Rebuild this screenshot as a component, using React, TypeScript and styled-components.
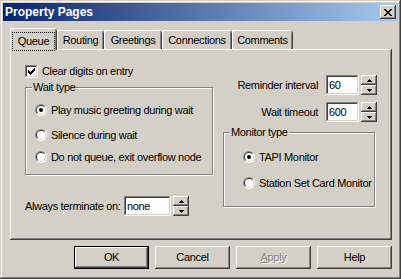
import React from "react";
import styled, { createGlobalStyle, css } from "styled-components";

const FACE = "#D4D0C8";
const SHADOW = "#808080";
const DARK = "#404040";
const HI = "#FFFFFF";

const Global = createGlobalStyle`
  html, body { margin: 0; padding: 0; background: ${FACE}; }
  body {
    font-family: "Liberation Sans", Arial, sans-serif;
    font-size: 11px;
    letter-spacing: -0.33px;
    color: #000;
  }
  * { box-sizing: border-box; }
`;

const raised = css`
  box-shadow: inset -1px -1px ${DARK}, inset 1px 1px ${HI},
    inset -2px -2px ${SHADOW}, inset 2px 2px ${FACE};
`;

const sunken = css`
  box-shadow: inset -1px -1px ${HI}, inset 1px 1px ${SHADOW},
    inset -2px -2px ${FACE}, inset 2px 2px ${DARK};
`;

const Window = styled.div`
  width: 401px;
  height: 279px;
  background: ${FACE};
  padding: 3px;
  display: flex;
  flex-direction: column;
  white-space: nowrap;
  box-shadow: inset -1px -1px ${DARK}, inset 1px 1px ${FACE},
    inset -2px -2px ${SHADOW}, inset 2px 2px ${HI};
`;

const TitleBar = styled.div`
  height: 18px;
  background: linear-gradient(to right, #0a246a, #a6caf0);
  display: flex;
  align-items: center;
  justify-content: space-between;
  padding: 0 2px 0 2px;
`;

const Title = styled.span`
  color: #fff;
  font-weight: bold;
  font-size: 12px;
  letter-spacing: 0;
  line-height: 14px;
`;

const CloseButton = styled.div`
  width: 16px;
  height: 14px;
  background: ${FACE};
  ${raised};
  display: flex;
  align-items: center;
  justify-content: center;
`;

const Body = styled.div`
  flex: 1;
  display: flex;
  flex-direction: column;
  padding: 7px 6px 0 7px;
`;

const TabStrip = styled.div`
  display: flex;
  align-items: flex-end;
  height: 21px;
`;

const Tab = styled.div<{ $active?: boolean; $w: number }>`
  width: ${(p) => p.$w}px;
  height: ${(p) => (p.$active ? 22 : 19)}px;
  background: ${FACE};
  display: flex;
  justify-content: center;
  align-items: flex-start;
  padding-top: ${(p) => (p.$active ? 5 : 4)}px;
  line-height: 13px;
  border-radius: 2px 2px 0 0;
  box-shadow: inset 1px 0 ${HI}, inset 0 1px ${HI}, inset -1px 0 ${DARK},
    inset -2px 0 ${SHADOW};
  ${(p) =>
    p.$active &&
    css`
      position: relative;
      z-index: 1;
      margin-bottom: -1px;
    `}
`;

const FocusLabel = styled.span`
  outline: 1px dotted #000;
  outline-offset: 0;
  padding: 2px 5px;
`;

const Panel = styled.div`
  width: 382px;
  height: 191px;
  background: ${FACE};
  ${raised};
  display: grid;
  grid-template-columns: 213px 1fr;
`;

const LeftCol = styled.div`
  display: flex;
  flex-direction: column;
  align-items: flex-start;
  padding: 16px 0 0 15px;
`;

const RightCol = styled.div`
  display: flex;
  flex-direction: column;
  padding: 26px 15px 0 0;
`;

const CheckRow = styled.label`
  display: flex;
  align-items: center;
  gap: 4px;
  height: 13px;
  line-height: 13px;
`;

const CheckBox = styled.span`
  width: 13px;
  height: 13px;
  background: #fff;
  ${sunken};
  display: block;
`;

const GroupBox = styled.div<{ $w: number; $h: number; $mt: number }>`
  position: relative;
  width: ${(p) => p.$w}px;
  height: ${(p) => p.$h}px;
  margin-top: ${(p) => p.$mt}px;
  border: 1px solid ${SHADOW};
  box-shadow: inset 1px 1px ${HI}, 1px 1px ${HI};
  display: flex;
  flex-direction: column;
`;

const GroupLabel = styled.span`
  position: absolute;
  top: -7px;
  left: 6px;
  padding: 0 1px;
  background: ${FACE};
  line-height: 13px;
`;

const RadioRow = styled.div<{ $mt: number; $ml: number }>`
  display: flex;
  align-items: center;
  gap: 4px;
  height: 14px;
  line-height: 14px;
  margin-top: ${(p) => p.$mt}px;
  margin-left: ${(p) => p.$ml}px;
`;

const RadioBox = styled.span`
  width: 12px;
  height: 12px;
  display: block;
  flex: none;
`;

const SpinRow = styled.div<{ $mt?: number }>`
  display: flex;
  align-items: center;
  justify-content: flex-end;
  height: 20px;
  margin-top: ${(p) => p.$mt ?? 0}px;
`;

const FieldLabel = styled.span<{ $w?: number }>`
  ${(p) => (p.$w ? `width: ${p.$w}px;` : "margin-right: 8px;")}
  flex: none;
`;

const Input = styled.div<{ $w: number }>`
  width: ${(p) => p.$w}px;
  height: 20px;
  background: #fff;
  ${sunken};
  padding: 0 3px;
  line-height: 20px;
  flex: none;
`;

const Spinner = styled.div`
  width: 16px;
  height: 20px;
  margin-left: 2px;
  display: flex;
  flex-direction: column;
  flex: none;
`;

const SpinButton = styled.div`
  flex: 1;
  background: ${FACE};
  ${raised};
  display: flex;
  align-items: center;
  justify-content: center;
`;

const TerminateRow = styled.div`
  display: flex;
  align-items: center;
  height: 20px;
  margin-top: 21px;
`;

const ButtonRow = styled.div`
  display: flex;
  justify-content: flex-end;
  gap: 6px;
  margin-top: 6px;
`;

const Button = styled.div<{ $default?: boolean; $disabled?: boolean }>`
  width: 75px;
  height: 23px;
  background: ${FACE};
  display: flex;
  align-items: center;
  justify-content: center;
  line-height: 13px;
  ${(p) =>
    p.$default
      ? css`
          box-shadow: inset 0 0 0 1px #000, inset -2px -2px ${DARK},
            inset 2px 2px ${HI}, inset -3px -3px ${SHADOW},
            inset 3px 3px ${FACE};
        `
      : raised}
  ${(p) =>
    p.$disabled &&
    css`
      color: ${SHADOW};
      text-shadow: 1px 1px ${HI};
    `}
`;

const Mnemonic = styled.span`
  text-decoration: underline;
`;

const Radio = ({ checked }: { checked?: boolean }) => (
  <RadioBox>
    <svg width="12" height="12" viewBox="0 0 12 12">
      <circle cx="6" cy="6" r="6" fill={HI} />
      <path d="M1.757 10.243 A6 6 0 0 1 10.243 1.757 Z" fill={SHADOW} />
      <circle cx="6" cy="6" r="5" fill={FACE} />
      <path d="M2.464 9.536 A5 5 0 0 1 9.536 2.464 Z" fill={DARK} />
      <circle cx="6" cy="6" r="4" fill={HI} />
      {checked && <circle cx="6" cy="6" r="2" fill="#000" />}
    </svg>
  </RadioBox>
);

const CheckMark = () => (
  <svg width="13" height="13" viewBox="0 0 13 13" shapeRendering="crispEdges">
    {[
      [3, 5],
      [4, 6],
      [5, 7],
      [6, 6],
      [7, 5],
      [8, 4],
      [9, 3],
    ].map(([x, y]) => (
      <rect key={x} x={x} y={y} width="1" height="3" fill="#000" />
    ))}
  </svg>
);

const CloseGlyph = () => (
  <svg width="8" height="7" viewBox="0 0 8 7" shapeRendering="crispEdges">
    {[
      [0, 0, 2], [6, 0, 2],
      [1, 1, 2], [5, 1, 2],
      [2, 2, 4],
      [3, 3, 2],
      [2, 4, 4],
      [1, 5, 2], [5, 5, 2],
      [0, 6, 2], [6, 6, 2],
    ].map(([x, y, w], i) => (
      <rect key={i} x={x} y={y} width={w} height="1" fill="#000" />
    ))}
  </svg>
);

const Arrow = ({ up }: { up?: boolean }) => (
  <svg width="5" height="3" viewBox="0 0 5 3" shapeRendering="crispEdges">
    {up ? (
      <>
        <rect x="2" y="0" width="1" height="1" fill="#000" />
        <rect x="1" y="1" width="3" height="1" fill="#000" />
        <rect x="0" y="2" width="5" height="1" fill="#000" />
      </>
    ) : (
      <>
        <rect x="0" y="0" width="5" height="1" fill="#000" />
        <rect x="1" y="1" width="3" height="1" fill="#000" />
        <rect x="2" y="2" width="1" height="1" fill="#000" />
      </>
    )}
  </svg>
);

const Spin = () => (
  <Spinner>
    <SpinButton>
      <Arrow up />
    </SpinButton>
    <SpinButton>
      <Arrow />
    </SpinButton>
  </Spinner>
);

const tabs = [
  { label: "Queue", w: 47 },
  { label: "Routing", w: 47 },
  { label: "Greetings", w: 58 },
  { label: "Connections", w: 70 },
  { label: "Comments", w: 61 },
];

export default function App() {
  return (
    <>
      <Global />
      <Window>
        <TitleBar>
          <Title>Property Pages</Title>
          <CloseButton>
            <CloseGlyph />
          </CloseButton>
        </TitleBar>
        <Body>
          <TabStrip>
            {tabs.map((t, i) => (
              <Tab key={t.label} $w={t.w} $active={i === 0}>
                {i === 0 ? <FocusLabel>{t.label}</FocusLabel> : t.label}
              </Tab>
            ))}
          </TabStrip>
          <Panel>
            <LeftCol>
              <CheckRow>
                <CheckBox>
                  <CheckMark />
                </CheckBox>
                Clear digits on entry
              </CheckRow>
              <GroupBox $w={188} $h={88} $mt={9}>
                <GroupLabel>Wait type</GroupLabel>
                <RadioRow $mt={15} $ml={9}>
                  <Radio checked />
                  Play music greeting during wait
                </RadioRow>
                <RadioRow $mt={11} $ml={9}>
                  <Radio />
                  Silence during wait
                </RadioRow>
                <RadioRow $mt={8} $ml={9}>
                  <Radio />
                  Do not queue, exit overflow node
                </RadioRow>
              </GroupBox>
              <TerminateRow>
                <FieldLabel $w={99}>Always terminate on:</FieldLabel>
                <Input $w={47}>none</Input>
                <Spin />
              </TerminateRow>
            </LeftCol>
            <RightCol>
              <SpinRow>
                <FieldLabel>Reminder interval</FieldLabel>
                <Input $w={33}>60</Input>
                <Spin />
              </SpinRow>
              <SpinRow $mt={7}>
                <FieldLabel>Wait timeout</FieldLabel>
                <Input $w={33}>600</Input>
                <Spin />
              </SpinRow>
              <GroupBox $w={152} $h={75} $mt={10}>
                <GroupLabel>Monitor type</GroupLabel>
                <RadioRow $mt={17} $ml={19}>
                  <Radio checked />
                  TAPI Monitor
                </RadioRow>
                <RadioRow $mt={12} $ml={19}>
                  <Radio />
                  Station Set Card Monitor
                </RadioRow>
              </GroupBox>
            </RightCol>
          </Panel>
          <ButtonRow>
            <Button $default>OK</Button>
            <Button>Cancel</Button>
            <Button $disabled>
              <span>
                <Mnemonic>A</Mnemonic>pply
              </span>
            </Button>
            <Button>Help</Button>
          </ButtonRow>
        </Body>
      </Window>
    </>
  );
}
